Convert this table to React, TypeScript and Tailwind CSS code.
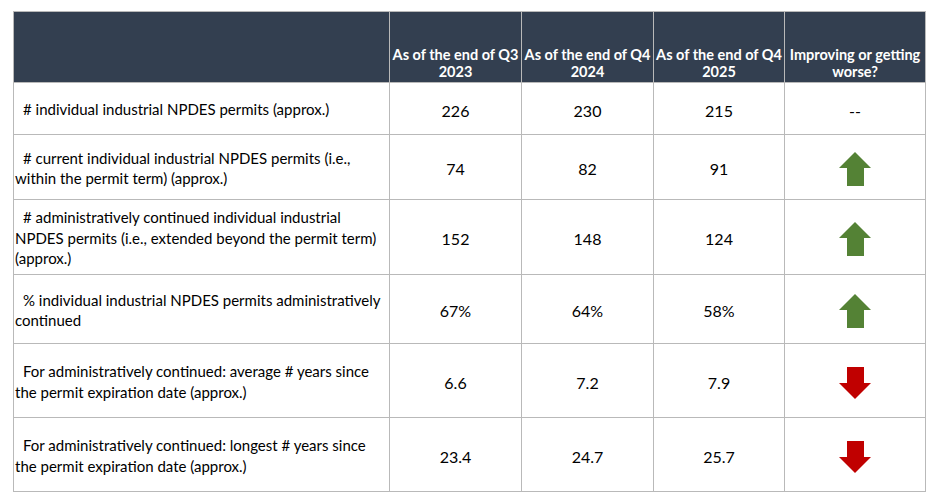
import React from 'react';

type Trend = 'up' | 'down' | 'none';

const rows: { label: string; values: string[]; trend: Trend; h: string }[] = [
  { label: '# individual industrial NPDES permits (approx.)', values: ['226', '230', '215'], trend: 'none', h: 'h-[52px]' },
  {
    label: '# current individual industrial NPDES permits (i.e., within the permit term) (approx.)',
    values: ['74', '82', '91'],
    trend: 'up',
    h: 'h-[65px]',
  },
  {
    label:
      '# administratively continued individual industrial NPDES permits (i.e., extended beyond the permit term) (approx.)',
    values: ['152', '148', '124'],
    trend: 'up',
    h: 'h-[75px]',
  },
  {
    label: '% individual industrial NPDES permits administratively continued',
    values: ['67%', '64%', '58%'],
    trend: 'up',
    h: 'h-[69px]',
  },
  {
    label: 'For administratively continued: average # years since the permit expiration date (approx.)',
    values: ['6.6', '7.2', '7.9'],
    trend: 'down',
    h: 'h-[74px]',
  },
  {
    label: 'For administratively continued: longest # years since the permit expiration date (approx.)',
    values: ['23.4', '24.7', '25.7'],
    trend: 'down',
    h: 'h-[74px]',
  },
];

const headers = [
  ['As of the end of Q3', '2023'],
  ['As of the end of Q4', '2024'],
  ['As of the end of Q4', '2025'],
  ['Improving or getting', 'worse?'],
];

function UpArrow() {
  return (
    <svg width="32" height="34" viewBox="0 0 32 34" className="mx-auto block">
      <polygon points="16,0 32,16 25,16 25,34 8,34 8,16 0,16" fill="#548235" />
    </svg>
  );
}

function DownArrow() {
  return (
    <svg width="32" height="32" viewBox="0 0 32 32" className="mx-auto block">
      <polygon points="8,0 25,0 25,16 32,16 16,32 0,16 8,16" fill="#c00000" />
    </svg>
  );
}

export default function App() {
  return (
    <div className="w-[936px] h-[500px] bg-white pt-[11px] pl-[13px] font-['Lato','Open_Sans',sans-serif] text-black">
      <table className="table-fixed border-collapse w-[912px]">
        <colgroup>
          <col className="w-[376px]" />
          <col className="w-[132px]" />
          <col className="w-[132px]" />
          <col className="w-[131px]" />
          <col className="w-[141px]" />
        </colgroup>
        <thead>
          <tr className="h-[71px] bg-[#333f50]">
            <th className="border border-[#b9b9b9]" />
            {headers.map((h, i) => (
              <th
                key={i}
                className="border border-[#b9b9b9] align-bottom p-0 pb-[2px] text-white text-[14.5px] leading-[17px] font-bold text-center whitespace-nowrap"
              >
                {h[0]}
                <br />
                {h[1]}
              </th>
            ))}
          </tr>
        </thead>
        <tbody>
          {rows.map((r, i) => (
            <tr key={i} className={r.h}>
              <td className="border border-[#b9b9b9] pl-[1px] pr-0 pt-[2px] text-[15px] leading-[20.5px] indent-[8px] align-middle">
                {r.label}
              </td>
              {r.values.map((v, j) => (
                <td key={j} className="border border-[#b9b9b9] text-center text-[16px] pt-1 align-middle">
                  {v}
                </td>
              ))}
              <td className="border border-[#b9b9b9] text-center text-[16px] pt-1 align-middle">
                {r.trend === 'up' ? <UpArrow /> : r.trend === 'down' ? <DownArrow /> : '--'}
              </td>
            </tr>
          ))}
        </tbody>
      </table>
    </div>
  );
}
